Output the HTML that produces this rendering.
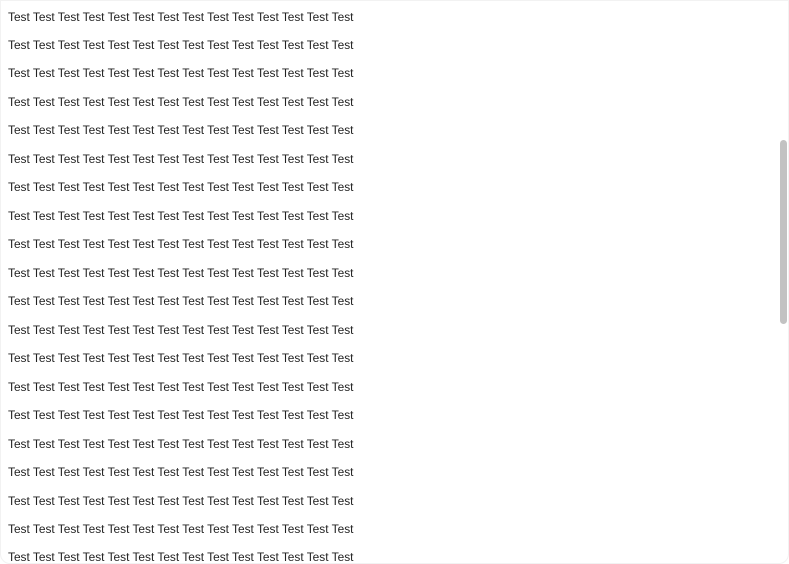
<!DOCTYPE html>
<html><head><style>
html,body{margin:0;padding:0;background:#fff;}
body{width:789px;height:563px;overflow:hidden;position:relative;font-family:"Liberation Sans",sans-serif;font-size:11.9px;color:#222;}
.box{position:absolute;left:0;top:0;width:787px;height:562px;border:1px solid #f2f2f2;border-radius:0 0 10px 10px;}
.l{position:absolute;left:8px;white-space:nowrap;line-height:14px;}
.sb{position:absolute;left:780px;top:140px;width:7px;height:184px;background:#c2c2c2;border-radius:4px;}
</style></head><body>
<div class="box"></div>
<div id="c"></div>
<div class="sb"></div>
<script>
var c=document.getElementById('c'),s='';
for(var i=0;i<20;i++){s+='<div class="l" style="top:'+(9.5+i*28.47).toFixed(1)+'px">'+Array(15).join('Test ').trim()+'</div>';}
c.innerHTML=s;
</script>
</body></html>
